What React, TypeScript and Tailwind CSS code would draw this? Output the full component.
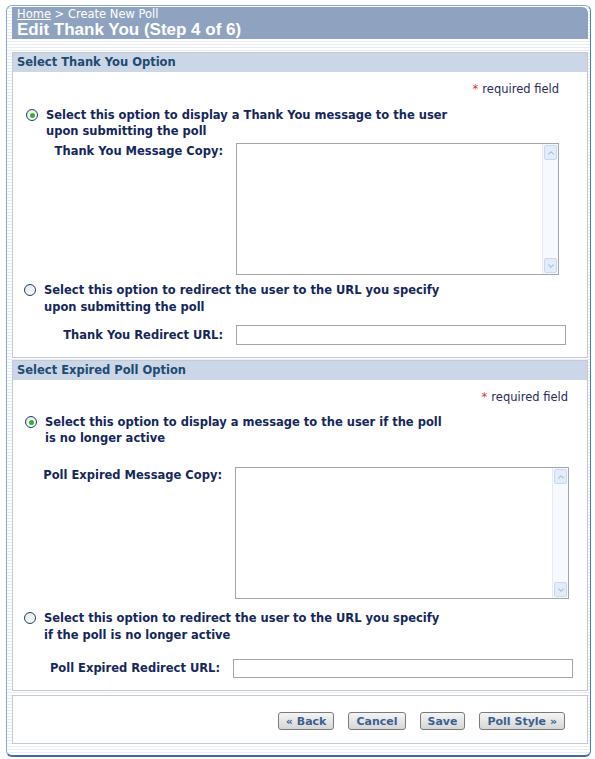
import type { ReactNode } from 'react';
import { ChevronDown, ChevronUp } from 'lucide-react';

const font = { fontFamily: '"DejaVu Sans", Verdana, sans-serif' };

function Radio({ checked }: { checked?: boolean }) {
	return (
		<span className="mt-[2px] flex h-[12px] w-[12px] shrink-0 items-center justify-center rounded-full border border-[#1c3f66] bg-[linear-gradient(135deg,#e6e6e6,#ffffff)]">
			{checked && (
				<span className="h-[5px] w-[5px] rounded-full bg-[#35b035]" />
			)}
		</span>
	);
}

function TextArea({ width }: { width: string }) {
	return (
		<div className={`flex h-[132px] border border-[#a5a5a5] bg-white ${width}`}>
			<div className="flex-1" />
			<div className="flex w-[16px] flex-col justify-between border-l border-[#e4ebf6] bg-[#f6f9fd] p-[1px]">
				<div className="flex h-[15px] items-center justify-center rounded-[2px] border border-[#c9d8ef] bg-[#e3ecf9] text-[#9fb4d6]">
					<ChevronUp size={10} strokeWidth={2.5} />
				</div>
				<div className="flex h-[15px] items-center justify-center rounded-[2px] border border-[#c9d8ef] bg-[#e3ecf9] text-[#9fb4d6]">
					<ChevronDown size={10} strokeWidth={2.5} />
				</div>
			</div>
		</div>
	);
}

function SectionHeader({ children }: { children: ReactNode }) {
	return (
		<div className="flex h-[19px] items-center bg-[#cbd6e6] px-[4px] text-[11.5px] font-bold text-[#1d4a72]">
			{children}
		</div>
	);
}

function Required({ right }: { right: string }) {
	return (
		<div className={`flex justify-end text-[11.5px] text-[#2a2a5a] ${right}`}>
			<span className="mr-[4px] text-[#e03a3a]">*</span>required field
		</div>
	);
}

function Button({ children }: { children: ReactNode }) {
	return (
		<button className="h-[18px] rounded-[3px] border border-[#7a7a7a] bg-[linear-gradient(to_bottom,#f4f4f4,#d6d6d6)] px-[7px] text-[11px] font-bold leading-none text-[#3b5f8f]">
			{children}
		</button>
	);
}

export default function App() {
	return (
		<div className="bg-white pt-[5px] pl-[6px]" style={font}>
			<div className="h-[752px] w-[585px] rounded-[6px] border border-[#88a9d4] border-b-2 border-b-[#3d6aa8] border-r-[#4f7bb5] bg-[image:repeating-linear-gradient(to_bottom,#ffffff_0px,#ffffff_2px,#e9edf3_2px,#e9edf3_3px)] pt-[1px] pl-[5px] pr-[2px]">
				{/* title bar */}
				<div className="flex h-[32px] w-[576px] flex-col justify-center rounded-tr-[6px] bg-[#8fa3c0] px-[5px] text-white">
					<div className="text-[11.5px] leading-[12px]">
						<span className="underline">Home</span> &gt; Create New Poll
					</div>
					<div
						className="mt-[1px] text-[17px] font-bold leading-[18px]"
						style={{ fontFamily: '"Liberation Sans", Arial, sans-serif' }}
					>
						Edit Thank You (Step 4 of 6)
					</div>
				</div>

				{/* thank you section */}
				<div className="mt-[13px] h-[306px] w-[576px] border border-[#c3cad6] bg-white">
					<SectionHeader>Select Thank You Option</SectionHeader>
					<Required right="mt-[9px] pr-[28px]" />
					<div className="mt-[9px] flex gap-[8px] pl-[13px] text-[11.5px] font-bold leading-[16px] text-[#15275a]">
						<Radio checked />
						<div>
							Select this option to display a Thank You message to the user
							<br />
							upon submitting the poll
						</div>
					</div>
					<div className="mt-[4px] flex">
						<div className="w-[210px] text-right text-[11.5px] font-bold text-[#15275a]">
							Thank You Message Copy:
						</div>
						<div className="ml-[13px]">
							<TextArea width="w-[323px]" />
						</div>
					</div>
					<div className="mt-[7px] flex gap-[8px] pl-[11px] text-[11.5px] font-bold leading-[17px] text-[#15275a]">
						<Radio />
						<div>
							Select this option to redirect the user to the URL you specify
							<br />
							upon submitting the poll
						</div>
					</div>
					<div className="mt-[9px] flex items-center">
						<div className="w-[210px] text-right text-[11.5px] font-bold text-[#15275a]">
							Thank You Redirect URL:
						</div>
						<div className="ml-[13px] h-[20px] w-[330px] border border-[#a5a5a5] bg-white" />
					</div>
				</div>

				{/* expired section */}
				<div className="mt-[2px] h-[331px] w-[576px] border border-[#c3cad6] bg-white">
					<SectionHeader>Select Expired Poll Option</SectionHeader>
					<Required right="mt-[9px] pr-[19px]" />
					<div className="mt-[8px] flex gap-[8px] pl-[12px] text-[11.5px] font-bold leading-[16px] text-[#15275a]">
						<Radio checked />
						<div>
							Select this option to display a message to the user if the poll
							<br />
							is no longer active
						</div>
					</div>
					<div className="mt-[21px] flex">
						<div className="w-[209px] text-right text-[11.5px] font-bold text-[#15275a]">
							Poll Expired Message Copy:
						</div>
						<div className="ml-[13px]">
							<TextArea width="w-[334px]" />
						</div>
					</div>
					<div className="mt-[11px] flex gap-[8px] pl-[11px] text-[11.5px] font-bold leading-[17px] text-[#15275a]">
						<Radio />
						<div>
							Select this option to redirect the user to the URL you specify
							<br />
							if the poll is no longer active
						</div>
					</div>
					<div className="mt-[15px] flex items-center">
						<div className="w-[207px] text-right text-[11.5px] font-bold text-[#15275a]">
							Poll Expired Redirect URL:
						</div>
						<div className="ml-[13px] h-[19px] w-[340px] border border-[#a5a5a5] bg-white" />
					</div>
				</div>

				{/* buttons */}
				<div className="mt-[4px] flex h-[49px] w-[576px] items-center justify-end gap-[14px] border border-[#c3cad6] bg-white pr-[22px] pt-[3px]">
					<Button>« Back</Button>
					<Button>Cancel</Button>
					<Button>Save</Button>
					<Button>Poll Style »</Button>
				</div>
			</div>
		</div>
	);
}
